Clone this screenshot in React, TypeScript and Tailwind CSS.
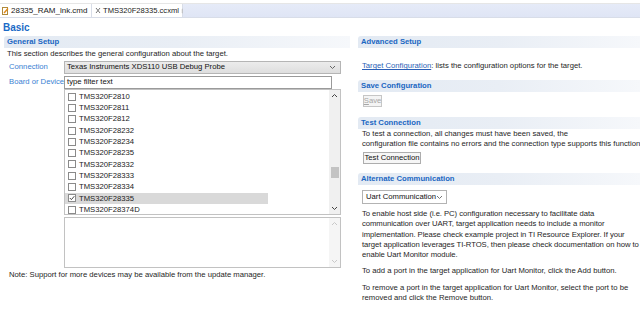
import React from "react";

const devices = [
  "TMS320F2810",
  "TMS320F2811",
  "TMS320F2812",
  "TMS320F28232",
  "TMS320F28234",
  "TMS320F28235",
  "TMS320F28332",
  "TMS320F28333",
  "TMS320F28334",
  "TMS320F28335",
  "TMS320F28374D",
];

const Chevron = ({ up = false, color = "#555" }: { up?: boolean; color?: string }) => (
  <svg width="7" height="5" viewBox="0 0 7 5" className="shrink-0">
    <path
      d={up ? "M1 4 L3.5 1.5 L6 4" : "M1 1 L3.5 3.5 L6 1"}
      fill="none"
      stroke={color}
      strokeWidth="1"
    />
  </svg>
);

const SectionHeader = ({ title }: { title: string }) => (
  <div className="h-[12px] flex items-center pl-[3px] rounded-tl-[3px] bg-gradient-to-r from-[#e3eaf3] via-[#e9eef5] to-[#f6f8fb] text-[7.7px] font-bold text-[#1a66c2]">
    {title}
  </div>
);

const CheckBox = ({ checked }: { checked: boolean }) => (
  <div className="w-[8px] h-[8px] shrink-0 border border-[#8a8a8a] bg-white flex items-center justify-center">
    {checked && (
      <svg width="6" height="6" viewBox="0 0 6 6">
        <path d="M0.8 3 L2.4 4.6 L5.3 1.2" fill="none" stroke="#333" strokeWidth="0.9" />
      </svg>
    )}
  </div>
);

const Tabs = () => (
  <div className="h-[18px]">
    <div className="h-[4px] border-b border-[#e6e6e6]" />
    <div className="flex h-[14px] border-b border-[#d8dde8]">
      <div className="w-[91px] flex items-center gap-[2px] pl-[2px] text-[8px] text-[#222] bg-white">
        <svg width="7" height="8" viewBox="0 0 7 8" className="shrink-0">
          <rect x="0.5" y="0.5" width="5" height="7" fill="#fff" stroke="#b08a3a" />
          <path d="M2 6 L6 1.5" stroke="#e08a1a" strokeWidth="1.4" />
        </svg>
        <span className="whitespace-nowrap">28335_RAM_lnk.cmd</span>
      </div>
      <div className="w-[92px] flex items-center gap-[2px] pl-[3px] text-[7.6px] text-[#222] bg-white border-x border-[#d8dde8]">
        <svg width="6" height="7" viewBox="0 0 6 7" className="shrink-0">
          <path d="M1 1 L5 6 M5 1 L1 6" stroke="#777" strokeWidth="1" />
        </svg>
        <span className="whitespace-nowrap">TMS320F28335.ccxml</span>
        <svg width="6" height="6" viewBox="0 0 6 6" className="shrink-0 ml-auto mr-[2px]">
          <path d="M2 0.5 V5.5 M4 0.5 V5.5 M0.5 2 H5.5 M0.5 4 H5.5" stroke="#b5b5b5" strokeWidth="0.8" />
        </svg>
      </div>
      <div className="flex-1 bg-gradient-to-b from-[#e6ebf8] to-[#dfe5f5]" />
    </div>
  </div>
);

const Left = () => (
  <div className="w-[346px] ml-[4px] shrink-0">
    <SectionHeader title="General Setup" />
    <div className="h-[11px] flex items-center pl-[3px] whitespace-nowrap">
      This section describes the general configuration about the target.
    </div>
    <div className="flex items-center h-[14px] mt-[1px]">
      <div className="w-[60px] pl-[5px] text-[#3a7fd3]">Connection</div>
      <div className="w-[277px] h-[13px] flex items-center justify-between px-[2px] border border-[#b5b5b5] bg-gradient-to-b from-[#ececec] to-[#dedede] text-[#111]">
        <span>Texas Instruments XDS110 USB Debug Probe</span>
        <span className="mr-[2px]">
          <Chevron color="#666" />
        </span>
      </div>
    </div>
    <div className="flex items-center h-[14px] mt-[1px]">
      <div className="w-[60px] pl-[5px] text-[#3a7fd3] whitespace-nowrap">Board or Device</div>
      <div className="w-[268px] h-[13px] flex items-center px-[2px] border border-[#9a9a9a] bg-white text-[#111]">
        type filter text
      </div>
    </div>
    <div className="flex">
      <div className="w-[60px]" />
      <div>
        <div className="w-[277px] h-[126px] border border-[#c2c2c2] flex overflow-hidden">
          <div className="flex-1 pt-[1px]">
            {devices.map((d) => (
              <div
                key={d}
                className={`h-[11.3px] w-[203px] flex items-center gap-[3px] pl-[3px] ${
                  d === "TMS320F28335" ? "bg-[#d9d9d9]" : ""
                }`}
              >
                <CheckBox checked={d === "TMS320F28335"} />
                <span className="text-[#222]">{d}</span>
              </div>
            ))}
          </div>
          <div className="w-[11px] bg-[#f0f0f0] flex flex-col items-center">
            <div className="h-[11px] flex items-center justify-center">
              <Chevron up color="#444" />
            </div>
            <div className="h-[66px]" />
            <div className="w-[8px] h-[11px] bg-[#c3c3c3]" />
            <div className="flex-1" />
            <div className="h-[11px] flex items-center justify-center">
              <Chevron color="#444" />
            </div>
          </div>
        </div>
        <div className="w-[277px] h-[51px] mt-[2px] border border-[#c2c2c2] flex">
          <div className="flex-1" />
          <div className="w-[11px] bg-[#f5f5f5] flex flex-col items-center justify-between py-[3px]">
            <Chevron up color="#c8c8c8" />
            <Chevron color="#c8c8c8" />
          </div>
        </div>
      </div>
    </div>
    <div className="h-[12px] flex items-center pl-[5px] mt-[1px] whitespace-nowrap">
      Note: Support for more devices may be available from the update manager.
    </div>
  </div>
);

const Right = () => (
  <div className="flex-1 ml-[8px] overflow-hidden whitespace-nowrap">
    <SectionHeader title="Advanced Setup" />
    <div className="h-[12px]" />
    <div className="h-[12px] flex items-center pl-[4px]">
      <span className="text-[#2b5fb6] underline">Target Configuration</span>
      <span>: lists the configuration options for the target.</span>
    </div>
    <div className="h-[8px]" />
    <SectionHeader title="Save Configuration" />
    <div className="h-[3px]" />
    <div className="ml-[5px] w-[19px] h-[12px] border border-[#c6c6c6] bg-[#f4f4f4] flex items-center justify-center text-[#a6a6a6]">
      <span>
        <span className="underline">S</span>ave
      </span>
    </div>
    <div className="h-[10px]" />
    <SectionHeader title="Test Connection" />
    <div className="pl-[4px] leading-[10px]">
      To test a connection, all changes must have been saved, the
      <br />
      configuration file contains no errors and the connection type supports this function
    </div>
    <div className="h-[3px]" />
    <div className="ml-[5px] w-[58px] h-[12px] border border-[#adadad] bg-[#f6f6f6] flex items-center justify-center text-[#111]">
      Test Connection
    </div>
    <div className="h-[9px]" />
    <SectionHeader title="Alternate Communication" />
    <div className="h-[5px]" />
    <div className="ml-[4px] w-[85px] h-[14px] border border-[#b3b3b3] bg-white flex items-center justify-between px-[3px] text-[#111]">
      <span>Uart Communication</span>
      <Chevron color="#777" />
    </div>
    <div className="pl-[4px] pt-[5px] leading-[10.3px] tracking-[-0.05px]">
      To enable host side (i.e. PC) configuration necessary to facilitate data
      <br />
      communication over UART, target application needs to include a monitor
      <br />
      implementation. Please check example project in TI Resource Explorer. If your
      <br />
      target application leverages TI-RTOS, then please check documentation on how to
      <br />
      enable Uart Monitor module.
    </div>
    <div className="pl-[4px] pt-[6px] leading-[10.3px]">
      To add a port in the target application for Uart Monitor, click the Add button.
    </div>
    <div className="pl-[4px] pt-[6px] leading-[10.3px]">
      To remove a port in the target application for Uart Monitor, select the port to be
      <br />
      removed and click the Remove button.
    </div>
  </div>
);

export default function App() {
  return (
    <div className="w-[640px] h-[313px] overflow-hidden bg-white font-['Liberation_Sans',Arial,sans-serif] text-[7.7px] text-[#1e1e1e]">
      <Tabs />
      <div className="h-[18px] flex items-center pl-[3px] text-[10px] font-bold text-[#1a6ac6]">
        Basic
      </div>
      <div className="flex">
        <Left />
        <Right />
      </div>
    </div>
  );
}
